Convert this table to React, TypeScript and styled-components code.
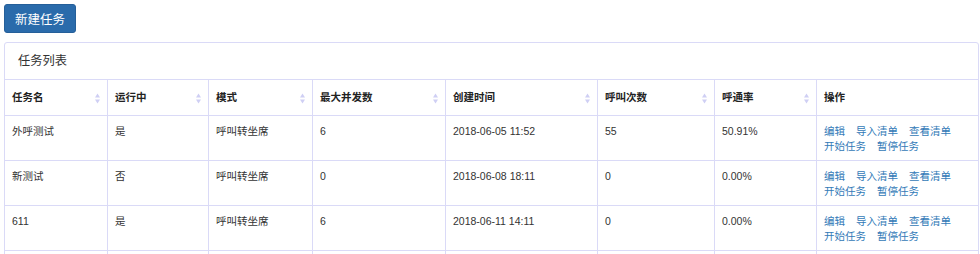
import React from "react";
import styled, { createGlobalStyle } from "styled-components";

const Global = createGlobalStyle`
  html, body { margin: 0; padding: 0; background: #fff; }
  body {
    padding: 4px 1px 0 4px;
    font-family: "Liberation Sans", "Noto Sans CJK SC", Arial, sans-serif;
    color: #333;
    overflow: hidden;
  }
`;

const Page = styled.div`
  display: flex;
  flex-direction: column;
  align-items: flex-start;
  gap: 9px;
`;

const PrimaryButton = styled.button`
  width: 72px;
  height: 29px;
  padding: 0;
  border: 1px solid #255f99;
  border-radius: 3px;
  background: #2a6bab;
  color: #fff;
  font-family: inherit;
  font-size: 12.5px;
  cursor: pointer;
`;

const Panel = styled.section`
  align-self: stretch;
  border: 1px solid #dadaf7;
  border-radius: 3px;
  background: #fff;
`;

const PanelHeading = styled.div`
  height: 36px;
  line-height: 36px;
  padding: 0 13px;
  font-size: 12.25px;
  color: #333;
`;

const Table = styled.table`
  width: 100%;
  table-layout: fixed;
  border-collapse: separate;
  border-spacing: 0;
  font-size: 10.5px;
`;

const Th = styled.th`
  position: relative;
  text-align: left;
  font-weight: 700;
  color: #222;
  padding: 10px 7px;
  line-height: 15px;
  border-top: 1px solid #dadaf7;
  border-left: 1px solid #dadaf7;
  &:first-child { border-left: none; }
`;

const Td = styled.td`
  vertical-align: top;
  padding: 8px 7px 6px;
  line-height: 15px;
  border-top: 1px solid #dadaf7;
  border-left: 1px solid #dadaf7;
  color: #333;
  &:first-child { border-left: none; }
`;

const EmptyRow = styled.tr`
  height: 45px;
`;

const SortIcon = styled.svg`
  position: absolute;
  right: 7px;
  top: 50%;
  margin-top: -5px;
`;

const Actions = styled.div`
  display: flex;
  flex-wrap: wrap;
  column-gap: 11px;
`;

const ActionLink = styled.a`
  color: #337ab7;
  text-decoration: none;
  cursor: pointer;
`;

const Sort = () => (
  <SortIcon width="5" height="11" viewBox="0 0 5 11">
    <path d="M2.5 0.5 L5 4.5 L0 4.5 Z" fill="#cfcff4" />
    <path d="M2.5 10.5 L5 6.5 L0 6.5 Z" fill="#cfcff4" />
  </SortIcon>
);

const columns = [
  { title: "任务名", width: 102, sort: true },
  { title: "运行中", width: 101, sort: true },
  { title: "模式", width: 104, sort: true },
  { title: "最大并发数", width: 133, sort: true },
  { title: "创建时间", width: 152, sort: true },
  { title: "呼叫次数", width: 117, sort: true },
  { title: "呼通率", width: 102, sort: true },
  { title: "操作", width: 162, sort: false },
];

const rows = [
  ["外呼测试", "是", "呼叫转坐席", "6", "2018-06-05 11:52", "55", "50.91%"],
  ["新测试", "否", "呼叫转坐席", "0", "2018-06-08 18:11", "0", "0.00%"],
  ["611", "是", "呼叫转坐席", "6", "2018-06-11 14:11", "0", "0.00%"],
];

const actions = ["编辑", "导入清单", "查看清单", "开始任务", "暂停任务"];

export default function App() {
  return (
    <>
      <Global />
      <Page>
        <PrimaryButton>新建任务</PrimaryButton>
        <Panel>
          <PanelHeading>任务列表</PanelHeading>
          <Table>
            <colgroup>
              {columns.map((c) => (
                <col key={c.title} style={{ width: c.width }} />
              ))}
            </colgroup>
            <thead>
              <tr>
                {columns.map((c) => (
                  <Th key={c.title}>
                    {c.title}
                    {c.sort && <Sort />}
                  </Th>
                ))}
              </tr>
            </thead>
            <tbody>
              {rows.map((r, i) => (
                <tr key={i}>
                  {r.map((v, j) => (
                    <Td key={j}>{v}</Td>
                  ))}
                  <Td>
                    <Actions>
                      {actions.map((a) => (
                        <ActionLink key={a}>{a}</ActionLink>
                      ))}
                    </Actions>
                  </Td>
                </tr>
              ))}
              <EmptyRow>
                {columns.map((c) => (
                  <Td key={c.title} />
                ))}
              </EmptyRow>
            </tbody>
          </Table>
        </Panel>
      </Page>
    </>
  );
}
